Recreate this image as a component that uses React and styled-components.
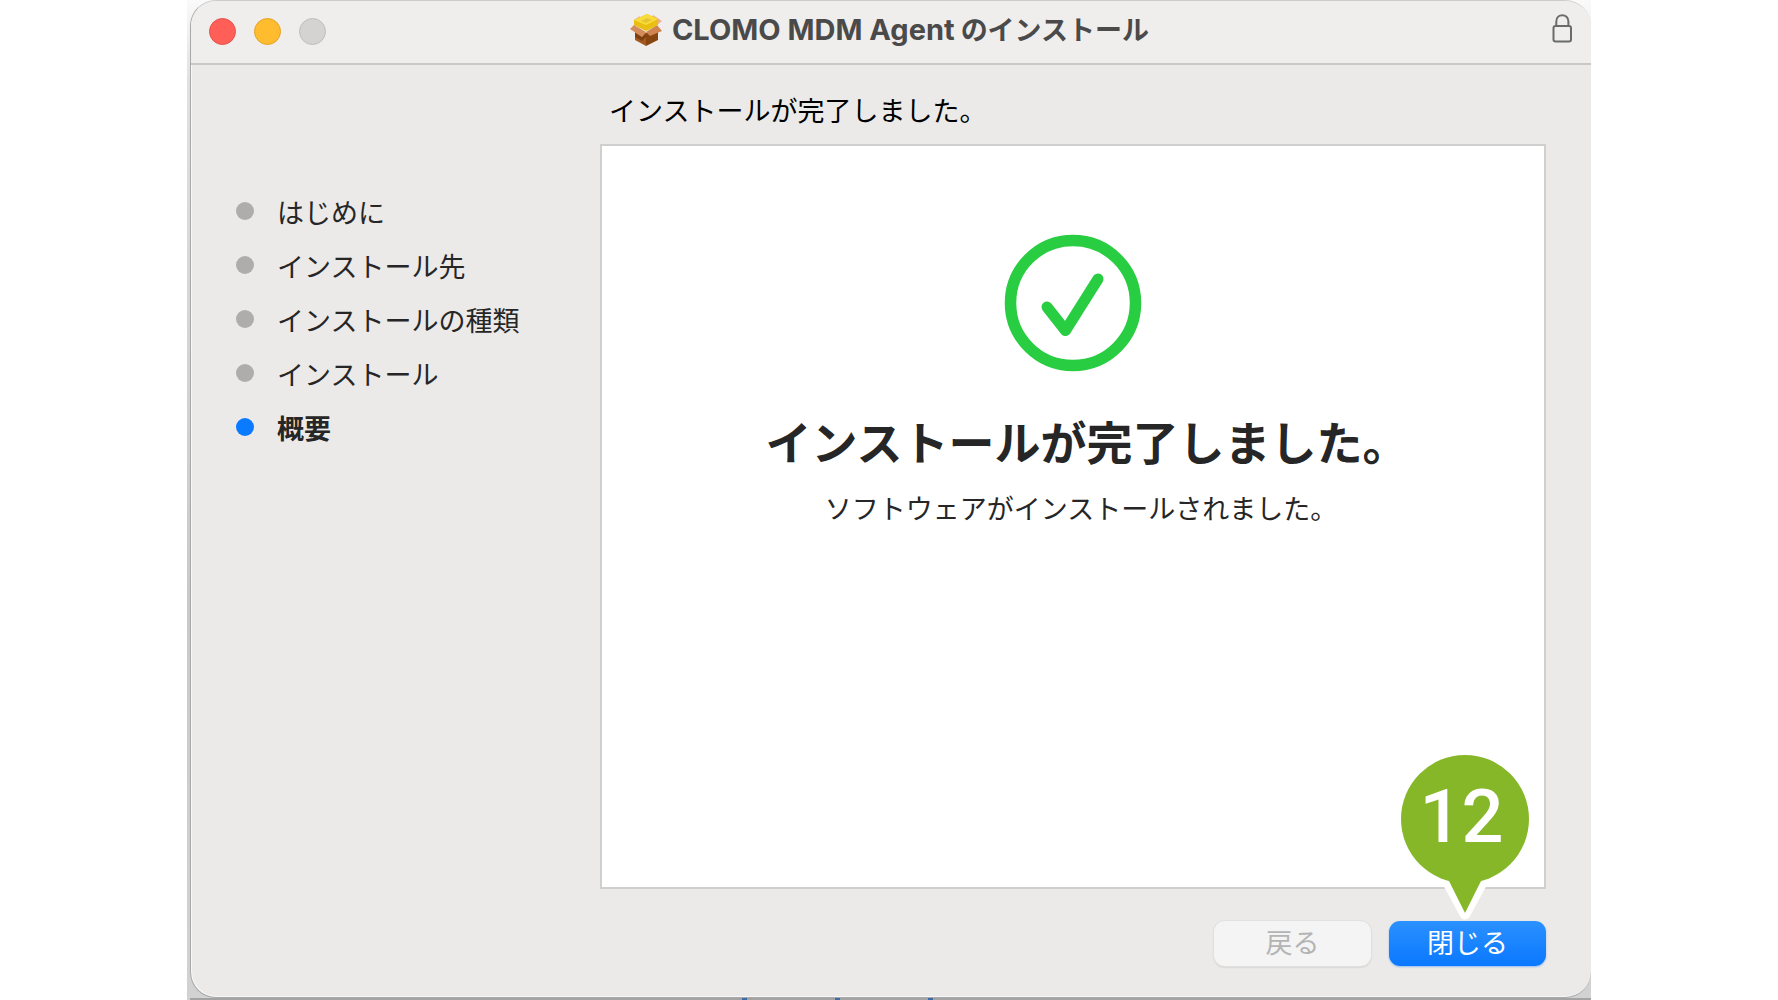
import React from "react";
import styled, { createGlobalStyle } from "styled-components";

const GlobalStyle = createGlobalStyle`
  *, *::before, *::after { box-sizing: border-box; }
  body {
    margin: 0;
    background: #ffffff;
    font-family: Inter, "Noto Sans CJK JP", sans-serif;
    color: #262626;
  }
`;

const Page = styled.div`
  display: flex;
  min-height: 100vh;
  padding: 0 187px;
`;

const Desktop = styled.div`
  flex: 1;
  display: flex;
  flex-direction: column;
  padding-left: 3px;
  background: linear-gradient(#fafafa, #e0e0e0 8%, #c9c9c9 60%, #d2d2d2);
`;

const Window = styled.main`
  flex: 1;
  display: flex;
  flex-direction: column;
  border: 1px solid #a9a9a9;
  border-top-color: #cccccc;
  border-right: 0;
  border-radius: 26px;
  background: #ebeae9;
  box-shadow: inset 1px -1px 0 #f7f7f7;
  overflow: hidden;
`;

const TitleBar = styled.header`
  display: grid;
  grid-template-columns: 1fr auto 1fr;
  align-items: center;
  height: 64px;
  padding: 0 18px 2px;
  border-bottom: 2px solid #c9c8c7;
  background: #efeeed;
`;

const Lights = styled.div`
  display: flex;
  gap: 18px;
`;

const Light = styled.button`
  width: 27px;
  height: 27px;
  padding: 0;
  border: 1px solid ${(p) => p.$edge};
  border-radius: 50%;
  background: ${(p) => p.$fill};
`;

const Title = styled.h1`
  display: flex;
  align-items: center;
  gap: 9px;
  margin: 0;
  padding: 0 4px 2px 0;
  font-size: 27px;
  font-weight: 700;
  line-height: 40px;
  color: #4b4a4a;
  white-space: nowrap;
`;

const ProductName = styled.span`
  margin-right: 6px;
  font-size: 29px;
`;

const LockButton = styled.button`
  justify-self: end;
  display: flex;
  padding: 0 0 4px;
  border: 0;
  background: none;
  color: #6b6b6b;
`;

const Body = styled.div`
  flex: 1;
  display: grid;
  grid-template-columns: 409px 1fr;
  padding-right: 45px;
`;

const Steps = styled.ol`
  margin: 0;
  padding: 119px 0 0 45px;
  list-style: none;
`;

const Step = styled.li`
  display: flex;
  align-items: center;
  gap: 23px;
  height: 54px;
  font-size: 27px;
  font-weight: ${(p) => (p.$current ? 700 : 400)};

  &::before {
    content: "";
    width: 18px;
    height: 18px;
    border-radius: 50%;
    background: ${(p) => (p.$current ? "#0a7aff" : "#aeadac")};
  }
`;

const Content = styled.section`
  display: flex;
  flex-direction: column;
`;

const Status = styled.p`
  margin: 0;
  padding: 27px 9px 12px;
  font-size: 27px;
  line-height: 40px;
  color: #000000;
`;

const Panel = styled.div`
  flex: 1;
  display: flex;
  flex-direction: column;
  align-items: center;
  padding-top: 88px;
  border: 2px solid #cfcfce;
  background: #ffffff;
`;

const Headline = styled.h2`
  margin: 37px 0 0;
  padding-left: 28px;
  font-size: 46px;
  font-weight: 700;
  line-height: 68px;
`;

const Detail = styled.p`
  margin: 13px 0 0;
  padding-left: 16px;
  font-size: 27px;
  line-height: 40px;
`;

const Actions = styled.footer`
  display: flex;
  justify-content: flex-end;
  gap: 18px;
  padding: 32px 0 31px;
`;

const ActionSlot = styled.div`
  position: relative;
  display: flex;
`;

const Action = styled.button`
  width: 157px;
  height: 45px;
  padding: 0;
  border: 0;
  border-radius: 11px;
  font-family: inherit;
  font-size: 27px;
  line-height: 40px;
  color: ${(p) => (p.$primary ? "#ffffff" : "#b4b4b4")};
  background: ${(p) =>
    p.$primary ? "linear-gradient(#2b91ff, #0a78ff)" : "#f4f4f4"};
  box-shadow: ${(p) =>
    p.$primary
      ? "0 1px 2px rgba(10, 120, 255, 0.4)"
      : "0 0 0 1px #e2e1e0, 0 1px 2px rgba(0, 0, 0, 0.25)"};
`;

const Pin = styled.div`
  position: absolute;
  left: 50%;
  bottom: 43px;
  width: 144px;
  height: 172px;
  margin-left: -75px;
  pointer-events: none;
`;

const PinShape = styled.svg`
  position: absolute;
  inset: 0;
`;

const PinNumber = styled.span`
  position: absolute;
  left: 0;
  right: 6px;
  top: 14px;
  font-family: Roboto, sans-serif;
  font-size: 74px;
  font-weight: 500;
  line-height: 104px;
  text-align: center;
  color: #ffffff;
`;

const Behind = styled.div`
  display: flex;
  gap: 88px;
  height: 2px;
  padding-left: 552px;
  background: #a3a3a3;
`;

const Speck = styled.span`
  width: 5px;
  background: #3c6ca8;
`;

function PackageIcon() {
  return (
    <svg width="34" height="34" viewBox="0 0 34 34" aria-hidden="true">
      <path d="M6 14 L17 20 L17 33 L6 27 Z" fill="#a35a20" />
      <path d="M29 14 L17 20 L17 33 L29 27 Z" fill="#87450f" />
      <path d="M6 20 L13 24 L17 21 L17 24 L13 28 L6 24 Z" fill="#7d3f10" />
      <path d="M5 7 L11 3 L9 11 L5 13 Z" fill="#eba581" />
      <path d="M24 2 L33 8 L28 12 L22 6 Z" fill="#efae8d" />
      <path d="M5 12 L17 19 L13 24 L1 16 Z" fill="#d58c5c" />
      <path d="M17 19 L28 12 L33 18 L21 23 Z" fill="#cf8452" />
      <path d="M5 7 L18 1 L29 6 L29 12 L17 18 L5 12 Z" fill="#e9c011" />
      <path d="M5 7 L18 1 L29 6 L17 12 Z" fill="#f8dc3b" />
      <path d="M12 8 L18 5 L23 7 L17 10 Z" fill="#e6c534" />
    </svg>
  );
}

function LockIcon() {
  return (
    <svg
      width="21"
      height="30"
      viewBox="0 0 21 30"
      fill="none"
      stroke="currentColor"
      strokeWidth="2"
      aria-hidden="true"
    >
      <rect x="1.5" y="12" width="17.5" height="15.5" rx="2" />
      <path d="M4.3 12 V7.5 C4.3 -0.8 16.4 -0.8 16.4 7.5 V12" />
    </svg>
  );
}

function SuccessIcon() {
  return (
    <svg
      width="138"
      height="138"
      viewBox="0 0 138 138"
      fill="none"
      stroke="#28cd41"
      role="img"
      aria-label="完了"
    >
      <circle cx="69" cy="69" r="62.5" strokeWidth="11.5" />
      <path
        d="M43 73 L61.5 96.5 L94 45"
        strokeWidth="11"
        strokeLinecap="round"
        strokeLinejoin="round"
      />
    </svg>
  );
}

const steps = [
  "はじめに",
  "インストール先",
  "インストールの種類",
  "インストール",
  "概要",
];

export default function App() {
  const current = steps.length - 1;

  return (
    <>
      <GlobalStyle />
      <Page lang="ja">
        <Desktop>
          <Window>
            <TitleBar>
              <Lights>
                <Light aria-label="閉じる" $fill="#ff5f57" $edge="#e5504a" />
                <Light aria-label="しまう" $fill="#febc2e" $edge="#e3a324" />
                <Light aria-label="拡大" disabled $fill="#d4d3d2" $edge="#bebdbc" />
              </Lights>
              <Title>
                <PackageIcon />
                <span>
                  <ProductName>CLOMO MDM Agent</ProductName>のインストール
                </span>
              </Title>
              <LockButton aria-label="証明書">
                <LockIcon />
              </LockButton>
            </TitleBar>
            <Body>
              <Steps>
                {steps.map((label, i) => (
                  <Step
                    key={label}
                    $current={i === current}
                    aria-current={i === current ? "step" : undefined}
                  >
                    {label}
                  </Step>
                ))}
              </Steps>
              <Content>
                <Status>インストールが完了しました。</Status>
                <Panel>
                  <SuccessIcon />
                  <Headline>インストールが完了しました。</Headline>
                  <Detail>ソフトウェアがインストールされました。</Detail>
                </Panel>
                <Actions>
                  <Action disabled>戻る</Action>
                  <ActionSlot>
                    <Action $primary>閉じる</Action>
                    <Pin>
                      <PinShape width="144" height="172" viewBox="0 0 144 172">
                        <path
                          d="M52 126 L72 163 L92 126"
                          fill="#ffffff"
                          stroke="#ffffff"
                          strokeWidth="11"
                          strokeLinejoin="round"
                        />
                        <circle cx="72" cy="68" r="64" fill="#86b728" />
                        <path d="M54 126 L72 162 L90 126 Z" fill="#86b728" />
                      </PinShape>
                      <PinNumber>12</PinNumber>
                    </Pin>
                  </ActionSlot>
                </Actions>
              </Content>
            </Body>
          </Window>
          <Behind>
            <Speck />
            <Speck />
            <Speck />
          </Behind>
        </Desktop>
      </Page>
    </>
  );
}
